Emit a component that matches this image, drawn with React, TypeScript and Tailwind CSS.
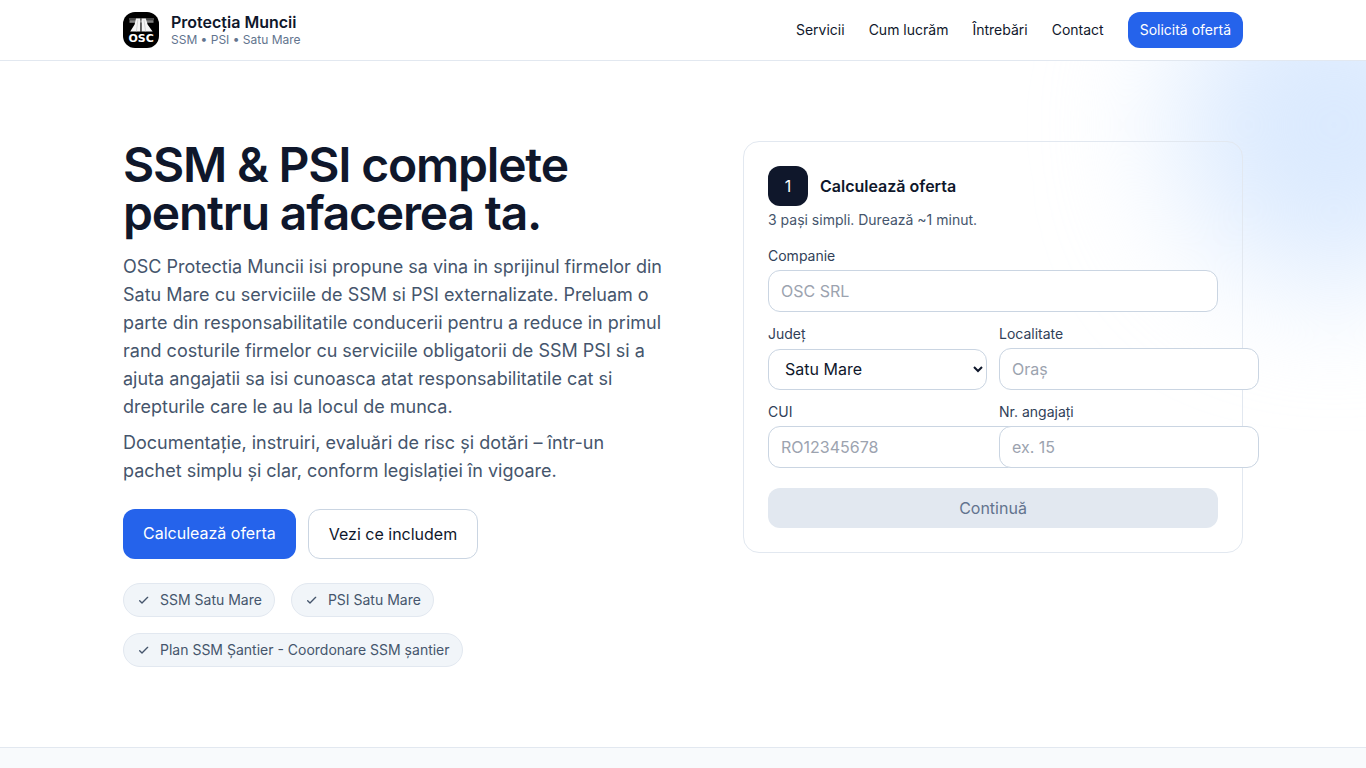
import type { InputHTMLAttributes } from "react";

const NAV = [
  { label: "Servicii", href: "#servicii" },
  { label: "Cum lucrăm", href: "#proces" },
  { label: "Întrebări", href: "#intrebari" },
  { label: "Contact", href: "#contact" },
];

const BADGES = ["SSM Satu Mare", "PSI Satu Mare", "Plan SSM Șantier - Coordonare SSM șantier"];

function Logo() {
  return (
    <svg viewBox="0 0 36 36" className="size-9 rounded-xl" role="img" aria-label="OSC">
      <rect width="36" height="36" fill="#000" />
      <rect x="6" y="6" width="25" height="2" fill="#484848" />
      <rect x="6.5" y="8.2" width="24" height="2.6" fill="#808080" />
      <path d="M7.2 19.6 L11.6 12.5 L13 6.4 H17.2 V19.6 Z" fill="#f4f4f4" />
      <path d="M18.6 19.6 V6.4 H22.8 L24.6 12.5 L29.6 19.6 Z" fill="#f4f4f4" />
      <rect x="17.4" y="10" width="1" height="9.6" fill="#777" />
      <path d="M14.8 8 L13.4 19.6 M21 8 L22.6 19.6" stroke="#bdbdbd" strokeWidth="0.6" />
      <text
        x="18.2"
        y="29.6"
        textAnchor="middle"
        fill="#fff"
        fontSize="11"
        fontWeight="700"
        fontFamily="'DejaVu Sans', sans-serif"
      >
        OSC
      </text>
    </svg>
  );
}

function Header() {
  return (
    <header className="relative z-10 border-b border-slate-200 bg-white">
      <div className="mx-auto flex max-w-6xl items-center justify-between px-4 py-3">
        <a href="#top" className="flex items-center gap-3">
          <Logo />
          <span className="flex flex-col">
            <span className="text-base leading-5 font-semibold">Protecția Muncii</span>
            <span className="text-xs leading-4 text-slate-500">SSM • PSI • Satu Mare</span>
          </span>
        </a>
        <nav className="flex items-center gap-6 text-sm">
          {NAV.map((item) => (
            <a key={item.href} href={item.href}>
              {item.label}
            </a>
          ))}
          <a href="#oferta" className="rounded-xl bg-[#2563eb] px-3 py-2 text-white">
            Solicită ofertă
          </a>
        </nav>
      </div>
    </header>
  );
}

function Badge({ text }: { text: string }) {
  return (
    <li className="flex items-center gap-2 rounded-full border border-slate-200 bg-slate-100 px-3 py-1.5">
      <svg
        viewBox="0 0 24 24"
        className="size-4"
        fill="none"
        stroke="currentColor"
        strokeWidth="2"
        strokeLinecap="round"
        strokeLinejoin="round"
        aria-hidden="true"
      >
        <path d="M5.5 13l3.5 3.5L17.5 8" />
      </svg>
      {text}
    </li>
  );
}

function Field({
  id,
  label,
  className,
  ...rest
}: { id: string; label: string } & InputHTMLAttributes<HTMLInputElement>) {
  return (
    <div className="flex flex-col items-start gap-1">
      <label htmlFor={id} className="text-sm text-slate-700">
        {label}
      </label>
      <input
        id={id}
        className={`rounded-xl border border-slate-300 bg-white px-3 py-2 placeholder:text-[#9ca3af] ${className}`}
        {...rest}
      />
    </div>
  );
}

function QuoteCard() {
  return (
    <form
      id="oferta"
      className="w-full max-w-[500px] justify-self-end rounded-2xl border border-slate-200 p-6"
    >
      <div className="flex items-center gap-3">
        <span className="grid size-10 place-items-center rounded-xl bg-slate-900 text-white">1</span>
        <h2 className="font-semibold">Calculează oferta</h2>
      </div>
      <p className="mt-1 text-sm text-slate-600">3 pași simpli. Durează ~1 minut.</p>

      <div className="mt-4 flex flex-col gap-3">
        <Field id="companie" label="Companie" placeholder="OSC SRL" className="w-full" />
        <div className="grid grid-cols-2 gap-3">
          <div className="flex flex-col justify-between">
            <label htmlFor="judet" className="text-sm text-slate-700">
              Județ
            </label>
            <select
              id="judet"
              defaultValue="Satu Mare"
              className="h-[41px] w-full rounded-xl border border-slate-300 bg-white px-3 pb-px"
            >
              <option>Satu Mare</option>
              <option>Maramureș</option>
              <option>Bihor</option>
            </select>
          </div>
          <Field id="localitate" label="Localitate" placeholder="Oraș" className="w-[260px]" />
        </div>
        <div className="grid grid-cols-2 gap-3">
          <Field id="cui" label="CUI" placeholder="RO12345678" className="w-[260px]" />
          <Field id="angajati" label="Nr. angajați" placeholder="ex. 15" className="w-[260px]" />
        </div>
      </div>

      <button
        type="button"
        disabled
        className="mt-5 w-full rounded-xl bg-slate-200 px-4 py-2 text-slate-500"
      >
        Continuă
      </button>
    </form>
  );
}

function Hero() {
  return (
    <section className="relative overflow-hidden">
      <div
        aria-hidden="true"
        className="pointer-events-none absolute -top-24 -right-32 size-80 rounded-full bg-blue-100 blur-3xl"
      />
      <div className="relative mx-auto grid max-w-6xl grid-cols-2 items-start gap-10 px-4 py-20">
        <div>
          <h1 className="text-5xl leading-none font-semibold tracking-tight">
            SSM &amp; PSI complete pentru afacerea ta.
          </h1>
          <p className="mt-4 text-lg leading-7 text-slate-600">
            OSC Protectia Muncii isi propune sa vina in sprijinul firmelor din Satu Mare cu
            serviciile de SSM si PSI externalizate. Preluam o parte din responsabilitatile
            conducerii pentru a reduce in primul rand costurile firmelor cu serviciile obligatorii
            de SSM PSI si a ajuta angajatii sa isi cunoasca atat responsabilitatile cat si
            drepturile care le au la locul de munca.
          </p>
          <p className="mt-2 text-lg leading-7 text-slate-600">
            Documentație, instruiri, evaluări de risc și dotări – într-un pachet simplu și clar,
            conform legislației în vigoare.
          </p>
          <div className="mt-6 flex gap-3">
            <a href="#oferta" className="rounded-xl bg-[#2563eb] px-5 py-3 text-white">
              Calculează oferta
            </a>
            <a href="#servicii" className="rounded-xl border border-slate-300 bg-white px-5 py-3">
              Vezi ce includem
            </a>
          </div>
          <ul className="mt-6 flex flex-wrap gap-4 text-sm text-slate-600">
            {BADGES.map((text) => (
              <Badge key={text} text={text} />
            ))}
          </ul>
        </div>
        <QuoteCard />
      </div>
    </section>
  );
}

export default function App() {
  return (
    <div
      id="top"
      className="flex min-h-screen flex-col bg-white font-['Inter','Liberation_Sans',sans-serif] text-slate-900"
    >
      <Header />
      <main className="flex grow flex-col">
        <Hero />
        <section id="servicii" className="grow border-t border-slate-200 bg-slate-50" />
      </main>
    </div>
  );
}
